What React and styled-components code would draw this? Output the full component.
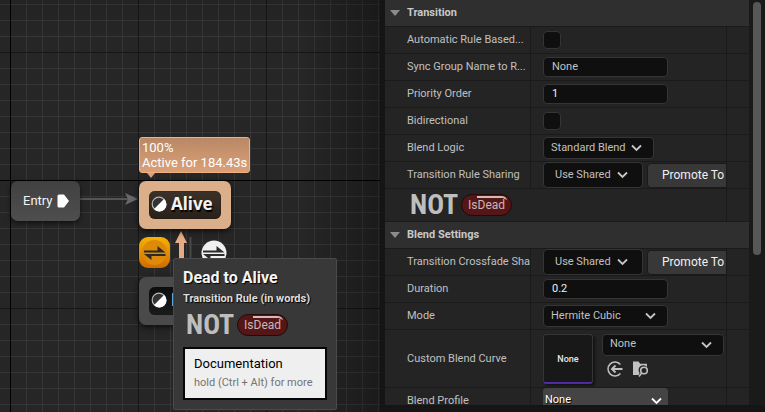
import React from "react";
import styled, { createGlobalStyle, css } from "styled-components";

const Global = createGlobalStyle`
  *, *::before, *::after { box-sizing: border-box; }
  html, body, #root { height: 100%; }
  body {
    margin: 0;
    overflow: hidden;
    background: #151515;
    color: #c0c0c0;
    font: 11px/16px Roboto, sans-serif;
  }
  button, input, select { font: inherit; color: inherit; margin: 0; }
`;

const Editor = styled.div`
  display: grid;
  grid-template-columns: minmax(0, 1fr) 380px;
  column-gap: 5px;
  height: 100vh;
`;

/* ---------- graph ---------- */

const Graph = styled.main`
  position: relative;
  overflow: hidden;
  background: #262626;
`;

const GridLines = styled.svg`
  position: absolute;
  inset: 0;
  width: 100%;
  height: 100%;
`;

const Vignette = styled.div`
  position: absolute;
  inset: 0;
  background:
    linear-gradient(to left, rgba(0, 0, 0, 0.3), transparent 80px),
    linear-gradient(to bottom, rgba(0, 0, 0, 0.08), transparent 40px);
`;

const Placed = styled.div`
  position: absolute;
  left: ${(p) => p.$x}px;
  top: ${(p) => p.$y}px;
`;

const EntryNode = styled.div`
  display: flex;
  align-items: center;
  gap: 4px;
  height: 40px;
  padding: 0 11px 0 12px;
  border-radius: 7px;
  background: linear-gradient(#414141, #4e4e4e);
  box-shadow: 0 2px 5px rgba(0, 0, 0, 0.6);
  color: #f4f4f4;
  font-size: 13px;
`;

const StateNode = styled.div`
  padding: 10px;
  border-radius: 7px;
  background: ${(p) => (p.$active ? "#dbaf8a" : "#4a4a4a")};
  box-shadow: 0 2px 6px rgba(0, 0, 0, 0.7);
`;

const StateTitle = styled.div`
  display: flex;
  align-items: center;
  gap: 4px;
  height: 28px;
  padding: 0 8px 2px 2px;
  border-radius: 6px;
  background: ${(p) =>
    p.$active ? "linear-gradient(#3d3229, #282019)" : "linear-gradient(#0d0f0e, #1a1c1b)"};
  box-shadow: inset 0 0 1px #000;
  color: #f2f2f2;
  font: bold 17px/26px "Noto Sans", sans-serif;
  text-shadow: 1px 2px 1px #000;
`;

const Bubble = styled.div`
  padding: 2px;
  border: 1px solid #f0b082;
  border-radius: 3px;
  background: linear-gradient(#b98866, #dba078);
  color: #fff;
  font-size: 13px;
  line-height: 15px;
  white-space: nowrap;

  &::after {
    content: "";
    position: absolute;
    left: 8px;
    top: 100%;
    border: 4px solid transparent;
    border-top: 5px solid #dba078;
    border-bottom: 0;
  }
`;

const TransitionButton = styled.button`
  display: block;
  padding: 0;
  border: 0;
  background: none;

  svg { display: block; }
`;

const TooltipCard = styled.div`
  width: 164px;
  height: 152px;
  padding: 9px;
  border: 1px solid #4a4a4a;
  border-radius: 2px;
  background: #383838;
  white-space: nowrap;
`;

const TooltipTitle = styled.h2`
  margin: 0;
  color: #f4f4f4;
  font-size: 16px;
  line-height: 20px;
  font-weight: 700;
  text-shadow: 1px 1px 1px #000;
`;

const TooltipSubtitle = styled.h3`
  margin: 0;
  color: #dcdcdc;
  font-size: 11px;
  line-height: 21px;
  font-weight: 700;
  text-shadow: 1px 1px 1px #000;
`;

const DocBox = styled.div`
  margin-top: 6px;
  padding: 6px 9px 5px;
  border: 2px solid #060606;
  background: #efefef;
  color: #000;
  font-size: 13px;
  line-height: 18px;
`;

const DocHint = styled.div`
  color: #747474;
  font-size: 11px;
  line-height: 20px;
`;

const Rule = styled.div`
  display: flex;
  align-items: center;
  gap: 3px;
  height: 32px;
  padding-left: ${(p) => (p.$inset ? 25 : 3)}px;
`;

const RuleOperator = styled.span`
  color: #bebebe;
  font: bold 28px/32px "Roboto Condensed", "Liberation Sans Narrow", Roboto, sans-serif;
`;

const VariablePill = styled.span`
  position: relative;
  height: 22px;
  padding: 0 6px;
  border: 1px solid #250808;
  border-radius: 11px;
  background: #541617;
  color: #c8b8b8;
  font-size: 12px;
  line-height: 20px;

  svg {
    position: absolute;
    left: 15px;
    top: 0;
  }
`;

/* ---------- details panel ---------- */

const Panel = styled.aside`
  display: grid;
  grid-template-columns: minmax(0, 1fr) 16px;
  min-height: 0;
  padding-bottom: 7px;
`;

const Properties = styled.div`
  overflow: hidden;
  background: #242424;
`;

const ScrollTrack = styled.div`
  padding: 2px 4px;
  background: #1a1a1a;
`;

const ScrollThumb = styled.div`
  height: 63%;
  border-radius: 4px;
  background: #575757;
`;

const SectionHeader = styled.button`
  display: flex;
  align-items: center;
  gap: 7px;
  width: 100%;
  height: 27px;
  padding: 0 5px 1px;
  border: 0;
  border-bottom: 1px solid #1a1a1a;
  background: #2f2f2f;
  color: #c8c8c8;
  font-weight: 700;
  text-align: left;
`;

const Row = styled.div`
  display: grid;
  grid-template-columns: 145px 1px minmax(0, 1fr) 1px 22px;
  height: ${(p) => (p.$tall ? 58 : 27)}px;
  border-bottom: 1px solid #1a1a1a;
`;

const RuleRow = styled.div`
  display: grid;
  grid-template-columns: minmax(0, 1fr) 1px 22px;
  height: 33px;
  border-bottom: 1px solid #1a1a1a;
`;

const Divider = styled.div`
  background: #1a1a1a;
`;

const Label = styled.label`
  align-self: center;
  padding-left: 22px;
  overflow: hidden;
  white-space: nowrap;
`;

const Value = styled.div`
  display: flex;
  align-items: center;
  gap: ${(p) => p.$gap || 4}px;
  padding-left: 12px;
  overflow: hidden;
`;

const field = css`
  border: 1px solid #353535;
  border-radius: 4px;
  background: #0f0f0f;
  outline: 0;
`;

const CheckBox = styled.input`
  ${field}
  appearance: none;
  width: 18px;
  height: 18px;
`;

const TextField = styled.input`
  ${field}
  width: 125px;
  height: 20px;
  padding: 0 8px 2px;
  color: ${(p) => (p.$bright ? "#f0f0f0" : "#c0c0c0")};
`;

const ComboFrame = styled.span`
  display: grid;
  flex: none;
  width: ${(p) => p.$w}px;
  height: ${(p) => (p.$big ? 26 : 22)}px;

  > * { grid-area: 1 / 1; }
  > svg {
    align-self: center;
    justify-self: end;
    margin-right: ${(p) => p.$end || 12}px;
    pointer-events: none;
  }
`;

const ComboSelect = styled.select`
  ${field}
  appearance: none;
  width: 100%;
  height: 100%;
  padding: 0 0 1px ${(p) => (p.$big ? 11 : 7)}px;

  ${(p) =>
    p.$light &&
    css`
      border-color: #444;
      border-radius: 3px;
      padding: 0 0 2px 1px;
      background: #444;
      color: #fff;
      text-shadow: 1px 1px 1px #000;
    `}
`;

const PromoteButton = styled.button`
  flex: none;
  height: 25px;
  padding: 0 14px 1px;
  border: 1px solid #1a1a1a;
  border-radius: 4px;
  background: #383838;
  color: #f0f0f0;
  font-size: 12px;
  white-space: nowrap;
`;

const Thumbnail = styled.button`
  flex: none;
  width: 50px;
  height: 50px;
  padding: 2px 0 0;
  border: 1px solid #353535;
  border-bottom: 2px solid #5029a8;
  border-radius: 3px;
  background: #181818;
  box-shadow: 2px 2px 3px rgba(0, 0, 0, 0.5);
  color: #e6e6e6;
  font-size: 9px;
  font-weight: 500;
`;

const AssetControls = styled.div`
  display: grid;
  align-content: start;
  gap: 5px;
  height: 50px;
`;

const IconRow = styled.div`
  display: flex;
  gap: 9px;
  padding-left: 5px;
`;

const IconButton = styled.button`
  padding: 0;
  border: 0;
  background: none;
  color: #c0c0c0;

  svg { display: block; }
`;

/* ---------- drawings ---------- */

const Chevron = ({ color = "#c6c6c6" }) => (
  <svg width="11" height="8" viewBox="0 0 11 8" fill="none" stroke={color} strokeWidth="1.8">
    <path d="M1 1.5l4.5 4.5L10 1.5" />
  </svg>
);

const Triangle = () => (
  <svg width="10" height="6" viewBox="0 0 10 6" fill="#8c8c8c">
    <path d="M0 0h10L5 6z" />
  </svg>
);

const HalfCircle = () => (
  <svg width="16" height="16" viewBox="0 0 16 16">
    <circle cx="8" cy="8" r="6.8" fill="#333" stroke="#b9b9b9" strokeWidth="1.2" />
    <path d="M13 3A7.1 7.1 0 1 1 3 13z" fill="#fff" />
  </svg>
);

const SwapGlyph = ({ color }) => (
  <path fill={color} d="M0 5.5h13.5V1L21.500 7.500H0zM21.500 9H0l7.500 6V11h14z" />
);

const SwapOrange = () => (
  <svg width="31" height="31" viewBox="0 0 31 31">
    <defs>
      <linearGradient id="amber" x1="0" y1="0" x2="0" y2="1">
        <stop offset="0" stopColor="#f5b400" />
        <stop offset="1" stopColor="#d06a00" />
      </linearGradient>
    </defs>
    <rect width="31" height="31" rx="9" fill="url(#amber)" />
    <circle cx="15.500" cy="15.500" r="12.500" fill="#dc8a08" />
    <g transform="translate(5 8)"><SwapGlyph color="#2e2a22" /></g>
  </svg>
);

const SwapWhite = () => (
  <svg width="26" height="26" viewBox="0 0 26 26">
    <circle cx="13" cy="13" r="12.500" fill="#f0f0f0" />
    <g transform="translate(2 5)"><SwapGlyph color="#2c2c2c" /></g>
  </svg>
);

const UseAssetIcon = () => (
  <svg width="16" height="16" viewBox="0 0 16 16" fill="none" stroke="currentColor" strokeWidth="1.5">
    <path d="M13.400 3.500A7 7 0 1 0 13.400 12.500" />
    <path d="M15.500 8H5M8.500 4.500L5 8l3.500 3.500" strokeWidth="1.900" />
  </svg>
);

const BrowseIcon = () => (
  <svg width="17" height="16" viewBox="0 0 17 16">
    <path d="M1 .5h5.500l1.700 2.200H15v3.200A4.600 4.600 0 0 0 7.600 12l-1 2H1z" fill="currentColor" />
    <g fill="none" stroke="currentColor" strokeWidth="1.600">
      <circle cx="12" cy="9.500" r="3.300" />
      <path d="M9.700 12L7 15.500" />
    </g>
  </svg>
);

const EntryPin = () => (
  <svg width="12" height="14" viewBox="0 0 12 14" fill="#fff">
    <path d="M2 .5h5L12 7 7 13.500H2A1.500 1.500 0 0 1 .5 12V2A1.500 1.500 0 0 1 2 .5z" />
  </svg>
);

const Backdrop = () => (
  <GridLines aria-hidden="true">
    <defs>
      <pattern id="minor" x="10" y="4" width="16" height="16" patternUnits="userSpaceOnUse">
        <path d="M0 0h16v1H1v15H0z" fill="#363636" />
      </pattern>
      <pattern id="major" x="10" y="52" width="128" height="128" patternUnits="userSpaceOnUse">
        <path d="M0 0h128v1H1v127H0z" fill="#161616" />
      </pattern>
    </defs>
    <rect width="100%" height="100%" fill="url(#minor)" />
    <rect width="100%" height="100%" fill="url(#major)" />
    <rect x="10" width="1" height="100%" fill="#000" />
    <rect y="180" width="100%" height="1" fill="#000" />
  </GridLines>
);

const Wires = () => (
  <GridLines aria-hidden="true">
    <path d="M80 199h50" stroke="#555" strokeWidth="2" />
    <path d="M125 193l13 6-13 6 3-6z" fill="#686868" />
    <path d="M190.500 237v40" stroke="#484848" strokeWidth="2" />
    <path d="M181 231l6 12h-3v34h-5v-34h-4z" fill="#e5ac84" />
  </GridLines>
);

/* ---------- parts ---------- */

const NotIsDead = ({ inset }) => (
  <Rule $inset={inset}>
    <RuleOperator>NOT</RuleOperator>
    <VariablePill>
      IsDead
      <svg width="32" height="7" viewBox="0 0 32 7" aria-hidden="true">
        <path d="M0 1h24q5 0 6 4l-4-2H0z" fill="#d5b9b9" />
      </svg>
    </VariablePill>
  </Rule>
);

const Section = ({ title, children }) => (
  <section>
    <SectionHeader type="button" aria-expanded="true">
      <Triangle />
      {title}
    </SectionHeader>
    {children}
  </section>
);

const Property = ({ id, label, tall, gap, children }) => (
  <Row $tall={tall}>
    <Label htmlFor={id}>{label}</Label>
    <Divider />
    <Value $gap={gap}>{children}</Value>
    <Divider />
  </Row>
);

const Combo = ({ id, value, width, big, light, end }) => (
  <ComboFrame $w={width} $big={big} $end={end}>
    <ComboSelect id={id} $big={big} $light={light} defaultValue={value}>
      <option>{value}</option>
    </ComboSelect>
    <Chevron color={light ? "#fff" : undefined} />
  </ComboFrame>
);

export default function App() {
  return (
    <Editor>
      <Global />
      <Graph>
        <Backdrop />
        <Vignette />
        <Wires />
        <Placed $x={11} $y={181}>
          <EntryNode>Entry <EntryPin /></EntryNode>
        </Placed>
        <Placed $x={139} $y={137}>
          <Bubble>100%<br />Active for 184.43s</Bubble>
        </Placed>
        <Placed $x={139} $y={181}>
          <StateNode $active>
            <StateTitle $active><HalfCircle />Alive</StateTitle>
          </StateNode>
        </Placed>
        <Placed $x={139} $y={277}>
          <StateNode>
            <StateTitle><HalfCircle />Dead</StateTitle>
          </StateNode>
        </Placed>
        <Placed $x={139} $y={237}>
          <TransitionButton type="button" aria-label="Dead to Alive"><SwapOrange /></TransitionButton>
        </Placed>
        <Placed $x={201} $y={240}>
          <TransitionButton type="button" aria-label="Alive to Dead"><SwapWhite /></TransitionButton>
        </Placed>
        <Placed $x={173} $y={258}>
          <TooltipCard role="tooltip">
            <TooltipTitle>Dead to Alive</TooltipTitle>
            <TooltipSubtitle>Transition Rule (in words)</TooltipSubtitle>
            <NotIsDead />
            <DocBox>
              Documentation
              <DocHint>hold (Ctrl + Alt) for more</DocHint>
            </DocBox>
          </TooltipCard>
        </Placed>
      </Graph>

      <Panel>
        <Properties>
          <Section title="Transition">
            <Property id="auto" label="Automatic Rule Based...">
              <CheckBox id="auto" type="checkbox" />
            </Property>
            <Property id="sync" label="Sync Group Name to R...">
              <TextField id="sync" defaultValue="None" />
            </Property>
            <Property id="priority" label="Priority Order">
              <TextField id="priority" defaultValue="1" $bright />
            </Property>
            <Property id="bidi" label="Bidirectional">
              <CheckBox id="bidi" type="checkbox" />
            </Property>
            <Property id="logic" label="Blend Logic">
              <Combo id="logic" value="Standard Blend" width={111} />
            </Property>
            <Property id="share" label="Transition Rule Sharing">
              <Combo id="share" value="Use Shared" width={100} big end={15} />
              <PromoteButton type="button">Promote To Shared</PromoteButton>
            </Property>
            <RuleRow>
              <NotIsDead inset />
              <Divider />
            </RuleRow>
          </Section>
          <Section title="Blend Settings">
            <Property id="crossfade" label="Transition Crossfade Sharing">
              <Combo id="crossfade" value="Use Shared" width={100} big end={15} />
              <PromoteButton type="button">Promote To Shared</PromoteButton>
            </Property>
            <Property id="duration" label="Duration">
              <TextField id="duration" defaultValue="0.2" $bright />
            </Property>
            <Property id="mode" label="Mode">
              <Combo id="mode" value="Hermite Cubic" width={125} />
            </Property>
            <Property id="curve" label="Custom Blend Curve" tall gap={9}>
              <Thumbnail type="button">None</Thumbnail>
              <AssetControls>
                <Combo id="curve" value="None" width={122} />
                <IconRow>
                  <IconButton type="button" aria-label="Use selected asset"><UseAssetIcon /></IconButton>
                  <IconButton type="button" aria-label="Browse to asset"><BrowseIcon /></IconButton>
                </IconRow>
              </AssetControls>
            </Property>
            <Property id="profile" label="Blend Profile">
              <Combo id="profile" value="None" width={125} big light end={6} />
            </Property>
          </Section>
        </Properties>
        <ScrollTrack><ScrollThumb /></ScrollTrack>
      </Panel>
    </Editor>
  );
}
